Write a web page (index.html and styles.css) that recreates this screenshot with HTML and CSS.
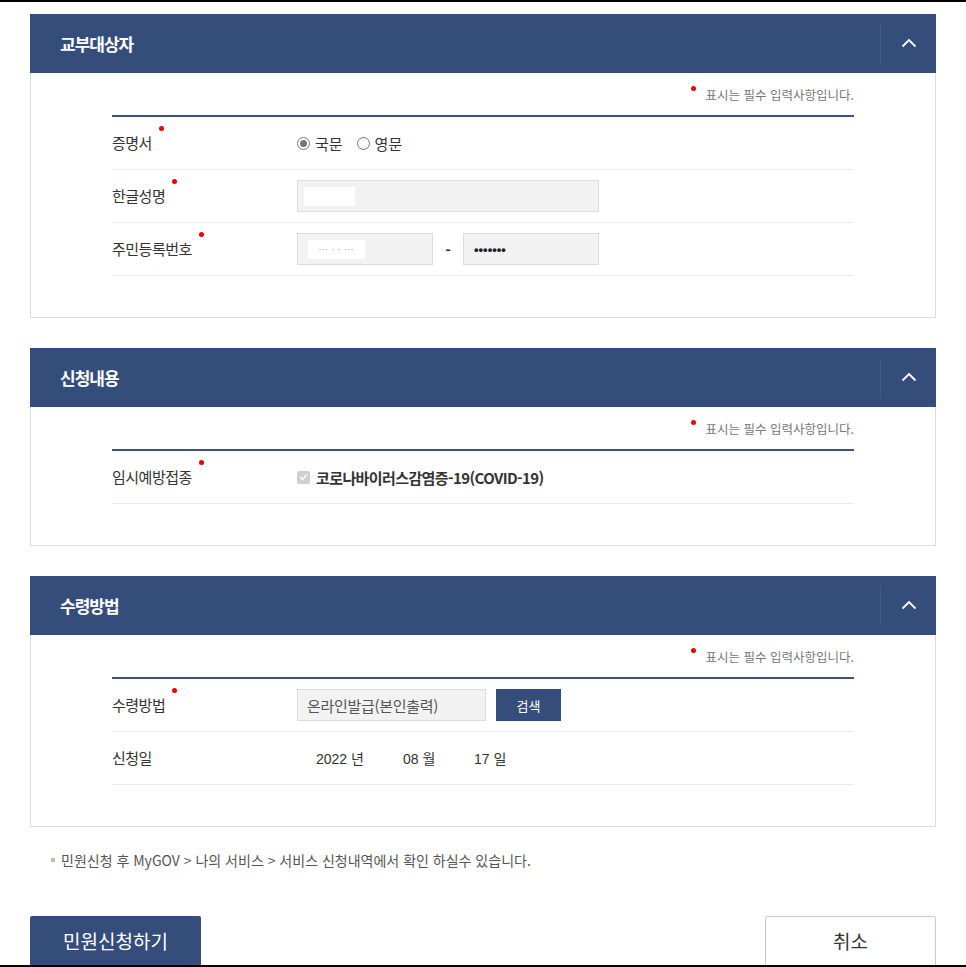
FILE: index.html
```html
<!DOCTYPE html>
<html lang="ko">
<head>
  <meta charset="UTF-8" />
  <meta name="viewport" content="width=device-width, initial-scale=1.0"/>
  <title>민원신청</title>
  <link rel="stylesheet" href="styles.css">
</head>
<body>
  <div class="page">

    <section class="panel">
      <div class="panel-head">
        <h3>교부대상자</h3>
        <button class="toggle" type="button">
          <svg width="16" height="10" viewBox="0 0 16 10"><path d="M1.5 8.5 L8 2 L14.5 8.5" fill="none" stroke="#fff" stroke-width="1.8"/></svg>
        </button>
      </div>
      <div class="panel-body">
        <p class="req-note"><span class="dot"></span>표시는 필수 입력사항입니다.</p>
        <div class="form-table">
          <div class="row">
            <div class="label"><span class="req">증명서</span></div>
            <div class="field">
              <label class="radio"><span class="circle checked"></span>국문</label>
              <label class="radio"><span class="circle"></span>영문</label>
            </div>
          </div>
          <div class="row">
            <div class="label"><span class="req">한글성명</span></div>
            <div class="field">
              <div class="input wide"><span class="mask name"></span></div>
            </div>
          </div>
          <div class="row">
            <div class="label"><span class="req">주민등록번호</span></div>
            <div class="field">
              <div class="input half"><span class="mask jumin">&middot;&middot;&middot; &middot; &middot; &middot;&middot;&middot;</span></div>
              <span class="dash">-</span>
              <div class="input half"><span class="pw">&bull;&bull;&bull;&bull;&bull;&bull;&bull;</span></div>
            </div>
          </div>
        </div>
      </div>
    </section>

    <section class="panel">
      <div class="panel-head">
        <h3>신청내용</h3>
        <button class="toggle" type="button">
          <svg width="16" height="10" viewBox="0 0 16 10"><path d="M1.5 8.5 L8 2 L14.5 8.5" fill="none" stroke="#fff" stroke-width="1.8"/></svg>
        </button>
      </div>
      <div class="panel-body">
        <p class="req-note"><span class="dot"></span>표시는 필수 입력사항입니다.</p>
        <div class="form-table">
          <div class="row">
            <div class="label"><span class="req">임시예방접종</span></div>
            <div class="field">
              <label class="check">
                <span class="box"><svg width="9" height="8" viewBox="0 0 9 8"><path d="M1 4 L3.5 6.5 L8 1.5" fill="none" stroke="#fff" stroke-width="1.4"/></svg></span>
                코로나바이러스감염증-19(COVID-19)
              </label>
            </div>
          </div>
        </div>
      </div>
    </section>

    <section class="panel">
      <div class="panel-head">
        <h3>수령방법</h3>
        <button class="toggle" type="button">
          <svg width="16" height="10" viewBox="0 0 16 10"><path d="M1.5 8.5 L8 2 L14.5 8.5" fill="none" stroke="#fff" stroke-width="1.8"/></svg>
        </button>
      </div>
      <div class="panel-body">
        <p class="req-note"><span class="dot"></span>표시는 필수 입력사항입니다.</p>
        <div class="form-table">
          <div class="row">
            <div class="label"><span class="req">수령방법</span></div>
            <div class="field">
              <div class="input method">온라인발급(본인출력)</div>
              <button class="btn-search" type="button">검색</button>
            </div>
          </div>
          <div class="row">
            <div class="label">신청일</div>
            <div class="field date">
              <span class="d-year">2022 년</span>
              <span class="d-month">08 월</span>
              <span class="d-day">17 일</span>
            </div>
          </div>
        </div>
      </div>
    </section>

    <p class="info">민원신청 후 MyGOV &gt; 나의 서비스 &gt; 서비스 신청내역에서 확인 하실수 있습니다.</p>

    <div class="actions">
      <button class="btn-primary" type="button">민원신청하기</button>
      <button class="btn-cancel" type="button">취소</button>
    </div>

  </div>
</body>
</html>
```

FILE: styles.css
```css
* {
  box-sizing: border-box;
}
body {
  margin: 0;
  background: #fff;
  font-family: "Noto Sans CJK KR", "Noto Sans", sans-serif;
  color: #333;
}
.page {
  height: 967px;
  overflow: hidden;
  border-top: 2px solid #000;
  border-bottom: 2px solid #000;
  padding: 12px 30px 0;
}
.panel {
  margin-bottom: 30px;
}
.panel:last-of-type {
  margin-bottom: 0;
}
.panel-head {
  display: flex;
  align-items: center;
  height: 59px;
  background: #354d7b;
  padding-left: 30px;
}
.panel-head h3 {
  flex: 1;
  margin: 0;
  color: #fff;
  font-size: 17px;
  font-weight: 700;
  letter-spacing: -1px;
}
.toggle {
  width: 56px;
  height: 40px;
  border: none;
  border-left: 1px solid rgba(255,255,255,0.09);
  background: transparent;
  display: flex;
  align-items: center;
  justify-content: center;
  padding: 0 0 2px;
  cursor: pointer;
}
.panel-body {
  border: 1px solid #dcdcdc;
  border-top: none;
  padding: 0 81px 41px 81px;
}
.req-note {
  margin: 0;
  height: 42px;
  display: flex;
  justify-content: flex-end;
  align-items: flex-end;
  padding-bottom: 14px;
  font-size: 12.5px;
  line-height: 1;
  color: #777;
}
.req-note .dot {
  width: 5px;
  height: 5px;
  border-radius: 50%;
  background: #e00;
  margin: 0 10px 10px 0;
  align-self: flex-end;
}
.form-table {
  border-top: 2px solid #3b5384;
}
.row {
  display: flex;
  align-items: center;
  height: 53px;
  border-bottom: 1px solid #ebebeb;
}
.label {
  width: 185px;
  font-size: 15px;
  letter-spacing: -0.5px;
  color: #333;
  padding-bottom: 2px;
}
.req {
  position: relative;
}
.req::after {
  content: "";
  position: absolute;
  right: -12px;
  top: -6px;
  width: 5px;
  height: 5px;
  border-radius: 50%;
  background: #e00;
}
.field {
  display: flex;
  align-items: center;
  font-size: 15px;
}
.radio {
  display: flex;
  align-items: center;
  margin-right: 14px;
  font-size: 15px;
  color: #333;
}
.circle {
  width: 13px;
  height: 13px;
  border: 1px solid #777;
  border-radius: 50%;
  margin-right: 5px;
  display: flex;
  align-items: center;
  justify-content: center;
}
.circle.checked::after {
  content: "";
  width: 7px;
  height: 7px;
  border-radius: 50%;
  background: #777;
}
.input {
  height: 32px;
  background: #f2f2f2;
  border: 1px solid #dcdcdc;
  display: flex;
  align-items: center;
}
.input.wide {
  width: 302px;
  padding-left: 6px;
}
.input.half {
  width: 136px;
  padding-left: 10px;
}
.mask {
  background: #fff;
  height: 19px;
  display: flex;
  align-items: center;
  justify-content: center;
}
.mask.name {
  width: 51px;
}
.mask.jumin {
  width: 57px;
  font-size: 8px;
  color: #999;
  letter-spacing: 1px;
}
.pw {
  font-family: "Liberation Sans", sans-serif;
  font-size: 13px;
  font-weight: 700;
  color: #222;
}
.dash {
  width: 30px;
  text-align: center;
  font-weight: 700;
  font-size: 15px;
}
.check {
  display: flex;
  align-items: center;
  font-size: 15px;
  font-weight: 700;
  color: #333;
  letter-spacing: -0.6px;
}
.check .box {
  width: 13px;
  height: 13px;
  background: #cfcfcf;
  border-radius: 2px;
  margin-right: 6px;
  display: flex;
  align-items: center;
  justify-content: center;
}
.input.method {
  width: 189px;
  padding-left: 9px;
  font-size: 15px;
  color: #555;
  letter-spacing: -0.3px;
}
.btn-search {
  margin-left: 10px;
  width: 65px;
  height: 32px;
  border: none;
  background: #354d7b;
  color: #fff;
  font-family: inherit;
  font-size: 13px;
}
.date {
  font-family: "Liberation Sans", "Noto Sans CJK KR", sans-serif;
  font-size: 14px;
  color: #333;
  padding-left: 19px;
}
.d-year {
  width: 87px;
}
.d-month {
  width: 71px;
}
.info {
  margin: 23px 0 0 21px;
  font-size: 14px;
  line-height: 20px;
  color: #555;
  letter-spacing: 0;
  display: flex;
  align-items: center;
}
.info::before {
  content: "";
  width: 4px;
  height: 4px;
  background: #bbb;
  margin-right: 6px;
}
.actions {
  display: flex;
  justify-content: space-between;
  margin-top: 46px;
}
.btn-primary,
.btn-cancel {
  width: 171px;
  height: 52px;
  font-family: inherit;
  font-size: 19px;
  font-weight: 400;
  border-radius: 2px;
  cursor: pointer;
  padding-bottom: 4px;
}
.btn-primary {
  background: #354d7b;
  color: #fff;
  border: none;
}
.btn-cancel {
  background: #fff;
  color: #333;
  border: 1px solid #ccc;
}
```
